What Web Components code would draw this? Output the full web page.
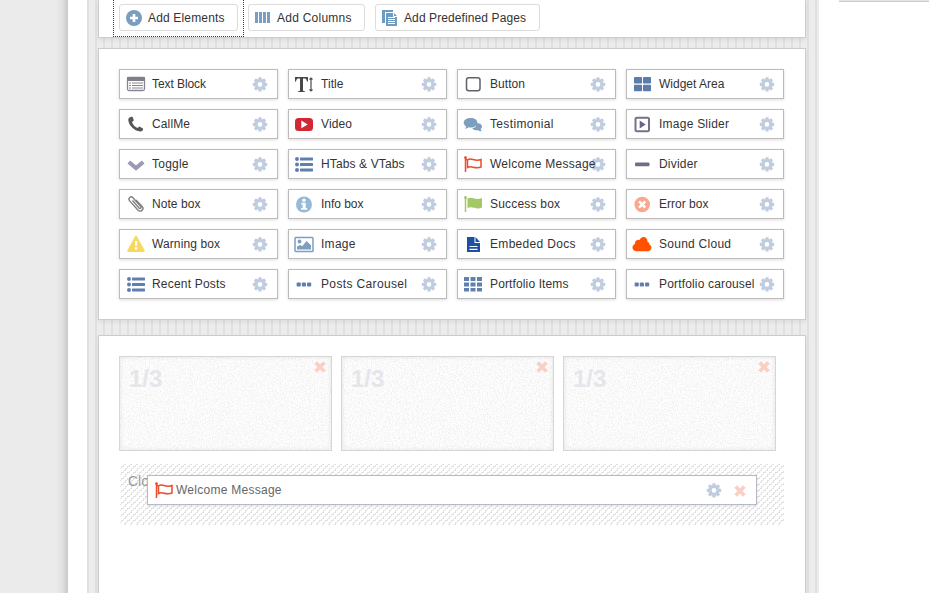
<!DOCTYPE html>
<html lang="en"><head><meta charset="utf-8"><title>Page builder</title>
<style>html,body{margin:0;height:100%;overflow:hidden;background:#fff}body{font:12px/16px "Liberation Sans",Arial,sans-serif;color:#333}</style></head>
<body><builder-app></builder-app>
<script>
const icons={
plus:'<circle cx="10" cy="10" r="8" fill="#7b9dbf"/><path d="M10 6v8M6 10h8" stroke="#fff" stroke-width="2.6"/>',
cols:'<path d="M2 4h3v11H2zM6 4h3v11H6zM10 4h3v11h-3zM14 4h3v11h-3z" fill="#7b9dbf"/>',
pages:'<path d="M2 2h11v2H5v11H2z" fill="#6d9cc0"/><path d="M6 5h8l3 3v10H6z" fill="#6d9cc0"/><path d="M13.500 4.500v4H17M8 9.500h7M8 11.500h7M8 13.500h7M8 15.500h7" fill="none" stroke="#fff"/>',
text:'<rect x="1.500" y="3.500" width="17" height="13" rx="1.500" fill="#fff" stroke="#878792" stroke-width="1.300"/><path d="M1 3h18v4H1z" fill="#808089"/><path d="M3 9h2M6 9h11M3 11.500h2M6 11.500h11M3 14h2M6 14h11" stroke="#858590" stroke-width="1.200"/>',
phone:'<path d="M3.500 3.500 6 2.500c1 1 1.500 2.500 1.800 4L6 8c1 3 3 5 5.500 6l1.800-1.500 3.700 2c.4 1.500-.8 3-2.500 3C7.500 17 2.500 10.500 2.300 6c0-1 .3-1.900 1.200-2.500z" fill="#555658"/>',
toggle:'<path d="m2.800 8 7.200 6 7.200-6" fill="none" stroke="#9d99b5" stroke-width="4.200"/>',
clip:'<g fill="none" stroke="#828282" stroke-width="1.400"><path d="M6.500 6.500 13 14c1 1.200 2.700-.2 1.700-1.500L7 3.800C4.800 1.500 1.700 4.200 3.500 6.600l8.300 9.300c3 3 6.800-.6 4.300-3.500L10 6"/></g>',
warn:'<path d="M10 2c.8 0 1.100.6 1.400 1.200L18.500 16c.5 1-.2 2-1.200 2H2.700c-1 0-1.700-1-1.200-2L8.600 3.200C8.900 2.600 9.200 2 10 2z" fill="#f7d95f"/><path d="M8.800 7h2.600l-.4 5H9.200zM8.900 13.200h2.400v2.300H8.900z" fill="#fff"/>',
list:'<g fill="#5e7fb0"><circle cx="3" cy="5" r="2"/><circle cx="3" cy="10.500" r="2"/><circle cx="3" cy="16" r="2"/><rect x="6" y="3.500" width="13" height="3" rx=".4"/><rect x="6" y="9" width="13" height="3" rx=".4"/><rect x="6" y="14.500" width="13" height="3" rx=".4"/></g>',
title:'<path d="M1 3h13v4.500h-1C12.500 5 12 4.500 9 4.500V16c0 1 .5 1.200 2 1.200V18H4v-.8c1.500 0 2-.2 2-1.200V4.500C3 4.500 2.500 5 2 7.500H1z" fill="#4b4848"/><path d="M17 4v13M15.500 5.500 17 4l1.500 1.500M15.500 15.500 17 17l1.500-1.500" fill="none" stroke="#4b4e55" stroke-width="1.200"/>',
video:'<rect x="1" y="4" width="18" height="13" rx="3.500" fill="#d42734"/><path d="M7.300 6.500v7.700l6.400-3.800z" fill="#fff"/>',
info:'<circle cx="10" cy="10.500" r="8" fill="#98b9d5"/><circle cx="10" cy="6.300" r="1.700" fill="#fff"/><path d="M7.300 8.800h4.400V14h1.500v1.700H7.100V14h1.500v-3.500H7.300z" fill="#fff"/>',
image:'<rect x="1" y="3.500" width="18" height="14" rx=".8" fill="#fff" stroke="#7d9ebf" stroke-width="1.500"/><circle cx="5.500" cy="7.500" r="1.900" fill="#7d9ebf"/><path d="M3 15.500v-3L6.200 11l2 1.300L12.500 7l4.500 4.200v4.300z" fill="#7d9ebf"/>',
dots:'<g fill="#607eae"><rect x="2.600" y="8.500" width="4.200" height="4" rx="1"/><rect x="7.800" y="8.500" width="4.200" height="4" rx="1"/><rect x="13" y="8.500" width="4.200" height="4" rx="1"/></g>',
button:'<rect x="3.500" y="3.800" width="13.500" height="13" rx="2.200" fill="none" stroke="#606169" stroke-width="1.500"/>',
chat:'<g fill="#7d9fbd"><path d="M13 9.500c3-1 6 .5 6 3 0 1-.5 1.900-1.400 2.500l1 2.200c-1.500 0-2.500-.4-3.300-1-3 .4-5-.4-6-2C12 14 14 12.300 13 9.500z"/><path d="M7.700 4c4 0 6.700 2 6.700 4.700s-3 4.800-6.700 4.800c-.7 0-1.300 0-1.900-.2-1 .8-2.300 1.400-3.800 1.500L3.300 12.500C1.700 11.600.7 10.200.7 8.700.7 6 3.700 4 7.700 4z"/></g>',
flag:'<g fill="none" stroke="#f04b2b" stroke-width="1.500"><path d="M2.500 3v15M4.500 6c4-3 6.500 2 13.500-.5V13c-6.500 2.500-9.500-2-13.500 .5zM4 6l-2-2"/></g><circle cx="2.500" cy="3.500" r="1.300" fill="#f0452b"/>',
green:'<path d="M4.500 4.500C9 2 12 6.800 19 4v9.500c-6 3-9.500-2-14.500 .5z" fill="#a3c866"/><path d="M2.500 4v14" stroke="#a3c866" stroke-width="1.500"/><circle cx="2.500" cy="3.500" r="1.500" fill="#a3c866"/>',
doc:'<path d="M4 3h7.500v6H17v9H4z" fill="#1d4fa7"/><path d="m12.500 3 4.500 5h-4.500z" fill="#1d4fa7"/><path d="M6.500 12.500h8M6.500 15.300h8" stroke="#fff" stroke-width="1.200"/>',
grid:'<g fill="#6280ae"><path d="M1 3h5v4H1zM7.500 3h5v4h-5zM14 3h5v4h-5zM1 8.500h5v4H1zM7.500 8.500h5v4h-5zM14 8.500h5v4h-5zM1 14h5v3.500H1zM7.500 14h5v3.500h-5zM14 14h5v3.500h-5z"/></g>',
widget:'<g fill="#5c7cac"><rect x="2" y="3" width="8" height="6.500" rx=".7"/><rect x="11" y="3" width="8" height="6.500" rx=".7"/><rect x="2" y="10.700" width="8" height="6.500" rx=".7"/><rect x="11" y="10.700" width="8" height="6.500" rx=".7"/></g>',
slider:'<rect x="3.500" y="3.800" width="13.500" height="13.500" rx="1.500" fill="none" stroke="#73718b" stroke-width="2"/><path d="M7.700 6.500v8l6-4z" fill="#67657f"/>',
divider:'<rect x="3" y="8.500" width="14.500" height="3.700" rx="1" fill="#706e86"/>',
error:'<circle cx="10.200" cy="10.500" r="7.800" fill="#fba68e"/><path d="m7.100 7.400 6.200 6.200m0-6.200-6.200 6.200" stroke="#fff" stroke-width="2.500"/>',
cloud:'<path d="M4.500 17.200C-.5 17.200-.6 11.300 3 10c-.5-3.500 3-5 4.500-3.800C9.500 1 16 2.500 15.500 8c1.800.3 2 1.600 1.800 2.600 3.300.9 2.600 6.600-1.300 6.600z" fill="#ff5100"/>'};
const svg=n=>`<svg width="20" height="20" viewBox="0 0 20 20">${icons[n]}</svg>`;
const gear=`<svg width="16" height="16" viewBox="-8 -8.4 16 16"><g fill="#c0cce0"><circle r="5.600"/>${[0,45,90,135].map(a=>`<rect x="-1.600" y="-7.200" width="3.200" height="14.400" rx=".6" transform="rotate(${a})"/>`).join('')}</g><circle r="2.300" fill="#fff"/></svg>`;
const cross=`<svg width="14" height="14" viewBox="0 0 14 14"><path d="m2.600 2.500 8.800 9m0-9-8.800 9" stroke="#fccfc5" stroke-width="3.800"/></svg>`;
const ctx=document.createElement('canvas').getContext('2d');
/* letter spacing that makes a 12px label span the given width */
const track=(t,w)=>{ctx.font='12px "Liberation Sans"';return w?((w-1-ctx.measureText(t).width)/(t.length-1)).toFixed(3):0};
const def=(name,render)=>customElements.define(name,class extends HTMLElement{connectedCallback(){if(!this.shadowRoot)this.attachShadow({mode:'open'}).innerHTML=render(this)}});

def('text-label',e=>{const t=e.getAttribute('text');return `<style>:host{display:block;white-space:nowrap;letter-spacing:${track(t,+e.getAttribute('w'))}px}</style>${t.replace('&','&amp;')}`});
def('tool-button',e=>`<style>:host{box-sizing:border-box;display:flex;height:27px;border:1px solid #dcdcdc;border-radius:3px;background:#fff;align-items:center}svg{display:block;margin:0 4px 0 4px;flex:none}</style>${svg(e.getAttribute('icon'))}<text-label text="${e.getAttribute('text')}" w="${e.getAttribute('w')}"></text-label>`);
def('element-tile',e=>`<style>:host{box-sizing:border-box;display:grid;grid-template-columns:20px minmax(0,1fr) 16px;column-gap:6px;height:30px;padding:0 9px 0 6px;border:1px solid #bbb;background:#fff;box-shadow:0 1px 3px rgba(0,0,0,.14);align-items:center}svg{display:block}text-label{z-index:1}:host(:not(:nth-child(4n+1)))>svg{margin-left:-1px}.g{margin-right:-1px}:host(:nth-child(4n))>.g{margin-left:1px}</style>${svg(e.getAttribute('icon'))}<text-label text="${e.getAttribute('text').replace('&','&amp;')}" w="${e.getAttribute('w')}"></text-label><span class="g">${gear}</span>`);
def('builder-panel',()=>`<style>:host{box-sizing:border-box;display:block;border:1px solid #ccc;background:#fff;box-shadow:0 2px 4px rgba(0,0,0,.07)}</style><slot></slot>`);
def('column-cell',()=>`<style>:host{box-sizing:border-box;position:relative;display:flex;justify-content:space-between;height:95px;border:1px solid #d6d6d6;box-shadow:inset 0 0 5px rgba(0,0,0,.09);padding:3px 4px 0 9px;background:#fff}.n{position:absolute;inset:0;width:100%;height:100%}b{position:relative;font-size:24px;line-height:37px;color:#e5e5eb}i{position:relative;height:14px;line-height:0}i svg{display:block}</style><svg class="n"><filter id="f" x="0" y="0" width="100%" height="100%"><feTurbulence type="fractalNoise" baseFrequency=".75" numOctaves="2" seed="4"/><feColorMatrix values="0 0 0 0 0  0 0 0 0 0  0 0 0 0 0  .16 0 0 0 -.06"/></filter><rect width="100%" height="100%" filter="url(#f)"/></svg><b><slot></slot></b><i>${cross}</i>`);
def('dragged-element',()=>`<style>:host{box-sizing:border-box;position:absolute;left:27px;top:11px;width:610px;height:30px;display:flex;align-items:center;padding:0 9px 0 6px;border:1px solid #b5b9c8;background:#fff;color:#666;box-shadow:0 1px 3px rgba(0,0,0,.12)}svg{display:block}text-label{flex:1;margin-left:2px}.x{margin:1px 0 0 11px}</style>${svg('flag')}<text-label text="Welcome Message" w="106.500"></text-label><span class="g">${gear}</span><span class="x">${cross}</span>`);
def('drop-zone',()=>`<style>:host{position:relative;display:block;height:61px;margin:13px 0 0 1px;width:664px}.p{position:absolute;inset:0;width:100%;height:100%}p{position:relative;margin:0;padding:9px 8px;font-size:14px;line-height:17px;color:#9a9a9a}</style><svg class="p" shape-rendering="crispEdges"><defs><pattern id="h" width="6" height="6" patternUnits="userSpaceOnUse"><path d="M4 0h2v1H4zM3 1h1v1H3zM1 2h3v1H1zM1 3h1v1H1zM0 4h1v1H0zM5 4h1v1H5zM5 5h1v1H5z" fill="#e2e2e2"/></pattern></defs><rect width="100%" height="100%" fill="url(#h)"/></svg><p>Clo</p><slot></slot>`);
const tiles=[['text','Text Block',55],['title','Title',23.5],['button','Button',36],['widget','Widget Area',67],['phone','CallMe',39],['video','Video',32],['chat','Testimonial',64.5],['slider','Image Slider',71],['toggle','Toggle',37.5],['list','HTabs & VTabs',84.5],['flag','Welcome Message',106.5],['divider','Divider',39.5],['clip','Note box',49.5],['info','Info box',43.5],['green','Success box',71],['error','Error box',50.5],['warn','Warning box',69],['image','Image',35.5],['doc','Embeded Docs',86.5],['cloud','Sound Cloud',73],['list','Recent Posts',74.5],['dots','Posts Carousel',87],['grid','Portfolio Items',79.5],['dots','Portfolio carousel',96.5]];
def('builder-app',()=>`<style>
:host{display:grid;grid-template-columns:68px 19px 732px 19px 1fr;height:593px;overflow:hidden;background:#fff}
.side{background:linear-gradient(90deg,#ebebeb 0 56px,#e2e2e2 62px,#c9c9c9 68px)}
.main{grid-column:3;box-sizing:border-box;padding:0 13px 0 11px;background:repeating-linear-gradient(90deg,#e0e0e0 0 2px,#ececec 2px 8px)}
.rail{grid-column:5;margin-left:1px;background:#e4e4e4;border-bottom:1px solid #ccc;box-sizing:border-box;height:2px}
.bar{height:38px;border-top:0;box-sizing:border-box}.tools{display:flex;height:37px}
.focus{box-sizing:border-box;width:131px;height:37px;margin-left:14px;border:1px dotted #174b62;border-top:0;padding:4px 0 0 5px}.focus tool-button{width:119px}
.tools>tool-button{margin-top:4px}.a{width:117px;margin-left:4px}.b{width:165px;margin-left:10px}
.tiles{height:272px;margin-top:10px;padding:20px 21px 0 20px}.grid{display:grid;grid-template-columns:159px 159px 159px 158px;gap:10px}
.work{height:300px;margin-top:15px;padding:20px}.cells{display:grid;grid-template-columns:repeat(3,213px);gap:9px}
</style><div class="side"></div><div class="main">
<builder-panel class="bar"><div class="tools"><div class="focus"><tool-button icon="plus" text="Add Elements" w="77.5"></tool-button></div><tool-button class="a" icon="cols" text="Add Columns" w="75.5"></tool-button><tool-button class="b" icon="pages" text="Add Predefined Pages" w="123"></tool-button></div></builder-panel>
<builder-panel class="tiles"><div class="grid">${tiles.map(([i,t,w])=>`<element-tile icon="${i}" text="${t.replace('&','&amp;')}" w="${w}"></element-tile>`).join('')}</div></builder-panel>
<builder-panel class="work"><div class="cells"><column-cell>1/3</column-cell><column-cell>1/3</column-cell><column-cell>1/3</column-cell></div><drop-zone><dragged-element></dragged-element></drop-zone></builder-panel>
</div><div class="rail"></div>`);
</script></body></html>
